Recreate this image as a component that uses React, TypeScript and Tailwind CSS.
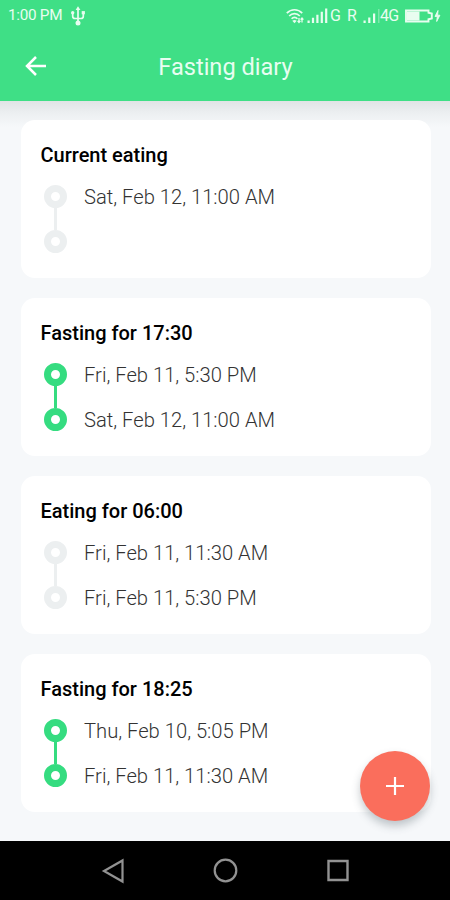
import clsx from 'clsx';

interface DiaryEntry {
  id: number;
  title: string;
  start: string;
  end?: string;
  fasting: boolean;
}

const ENTRIES: DiaryEntry[] = [
  { id: 1, title: 'Current eating', start: 'Sat, Feb 12, 11:00 AM', fasting: false },
  { id: 2, title: 'Fasting for 17:30', start: 'Fri, Feb 11, 5:30 PM', end: 'Sat, Feb 12, 11:00 AM', fasting: true },
  { id: 3, title: 'Eating for 06:00', start: 'Fri, Feb 11, 11:30 AM', end: 'Fri, Feb 11, 5:30 PM', fasting: false },
  { id: 4, title: 'Fasting for 18:25', start: 'Thu, Feb 10, 5:05 PM', end: 'Fri, Feb 11, 11:30 AM', fasting: true },
];

function UsbIcon() {
  return (
    <svg width="16" height="20" viewBox="0 0 16 20" fill="none" stroke="currentColor" strokeWidth="1.7">
      <path d="M8 3v13M2.7 7v3.2c0 1.6 1 2.3 2.3 2.3h6c1.3 0 2.3-.7 2.3-2.3V7" />
      <path d="M8 .3l2.4 3.7H5.6z" fill="currentColor" stroke="none" />
      <circle cx="8" cy="17" r="2.5" fill="currentColor" stroke="none" />
      <circle cx="2.7" cy="6.7" r="1.7" fill="currentColor" stroke="none" />
      <path d="M11.7 5.1h3.2v3.2h-3.2z" fill="currentColor" stroke="none" />
    </svg>
  );
}

function WifiIcon() {
  return (
    <svg width="19" height="16" viewBox="0 0 19 16" fill="none" stroke="currentColor" strokeWidth="1.7">
      <path d="M.8 5.2C5.2.6 11.8.6 16.2 5.2M3.2 8c3-3.2 7.6-3.2 10.6 0M5.6 10.8c1.7-1.9 4.1-1.9 5.8 0" />
      <path d="M8.5 15.2l-2.2-2.4c1.3-1.2 3.1-1.2 4.4 0z" fill="currentColor" stroke="none" />
      <path d="M13 10v4.5M16 10v4.5M11.6 12.8l1.4 1.7 1.4-1.7M14.6 11.7L16 10l1.4 1.7" strokeWidth="1.3" />
    </svg>
  );
}

function SignalIcon() {
  return (
    <svg width="21" height="16" viewBox="0 0 21 16" fill="currentColor">
      <path d="M.5 12.5h2.2V15H.5zM4.9 9.8h2.2V15H4.9zM9.3 6.8h2.2V15H9.3zM13.7 3.8h2.2V15h-2.2zM18.1.5h2.2V15h-2.2z" />
    </svg>
  );
}

function WeakSignalIcon() {
  return (
    <svg width="17" height="16" viewBox="0 0 17 16" fill="currentColor">
      <path d="M.5 12.5h2.2V15H.5zM5.2 9.5h2.2V15H5.2zM10 5.5h2.2V15H10z" />
      <path d="M15 1h1.5v14H15z" opacity="0.35" />
    </svg>
  );
}

function BatteryIcon() {
  return (
    <svg width="36" height="14" viewBox="0 0 36 14" fill="none">
      <path d="M1 1.5h22.5v2.2l3.3.8v5l-3.3.8v2.2H1z" stroke="currentColor" strokeWidth="1.9" />
      <path d="M2 2.5h12.5v9H2z" fill="currentColor" />
      <path d="M33 1.5l-3 5.9h2.3l-.6 5.1 3.2-6.3h-2.3z" fill="currentColor" stroke="currentColor" strokeWidth=".9" />
    </svg>
  );
}

function StatusBar() {
  return (
    <div className="flex h-8 items-center text-[#e8fdf0]">
      <span className="ml-[8px] w-[55px] whitespace-nowrap text-[15.3px] leading-none tracking-[-0.3px]">1:00 PM</span>
      <span className="ml-[7px]"><UsbIcon /></span>
      <div className="ml-auto mr-[9px] flex items-center whitespace-nowrap text-[16px] leading-none">
        <WifiIcon />
        <span className="ml-[2px]"><SignalIcon /></span>
        <span className="ml-[2px] w-[12px]">G</span>
        <span className="ml-[5px] w-[10px]">R</span>
        <span className="ml-[6px]"><WeakSignalIcon /></span>
        <span className="w-[21px] tracking-[-0.8px]">4G</span>
        <span className="ml-[4px]"><BatteryIcon /></span>
      </div>
    </div>
  );
}

function Header() {
  return (
    <header className="h-[100.5px] shrink-0 bg-[#3fdf86]">
      <StatusBar />
      <div className="flex h-[68px] items-center text-white">
        <button type="button" aria-label="Back" className="ml-[25px] flex h-[22px] w-[22px] items-center justify-center">
          <svg width="22" height="22" viewBox="0 0 22 22" fill="none" stroke="currentColor" strokeWidth="2.5">
            <path d="M21 11H2.5M11 2l-9 9 9 9" />
          </svg>
        </button>
        <h1 className="mr-[46px] flex-1 pt-[3px] text-center text-[23.6px] font-normal text-[#e8fdf1]">Fasting diary</h1>
      </div>
    </header>
  );
}

function Ring({ active }: { active: boolean }) {
  return <span className={clsx('h-[23px] w-[23px] rounded-full border-[7.5px] bg-white', active ? 'border-[#35dc80]' : 'border-[#eceff0]')} />;
}

function EntryCard({ entry }: { entry: DiaryEntry }) {
  return (
    <article className="h-[158px] shrink-0 rounded-[14px] bg-white px-5 pt-[21px]">
      <h2 className="text-[20px] font-medium leading-7 text-black">{entry.title}</h2>
      <div className="mt-[16px] flex pl-[3.5px]">
        <div className="flex flex-col items-center">
          <Ring active={entry.fasting} />
          <span className={clsx('h-[22px] w-[3px]', entry.fasting ? 'bg-[#35dc80]' : 'bg-[#eceff0]')} />
          <Ring active={entry.fasting} />
        </div>
        <div className="ml-[17px] flex flex-col gap-[22px] pt-[0.7px] text-[20.2px] font-light leading-[23px] text-[#333]">
          <time>{entry.start}</time>
          {entry.end && <time>{entry.end}</time>}
        </div>
      </div>
    </article>
  );
}

function NavBar() {
  return (
    <nav className="flex h-[59px] shrink-0 items-center justify-between bg-black pl-[101px] pr-[100px] text-[#929292]">
      <svg width="24" height="26" viewBox="0 0 24 26" fill="none" stroke="currentColor" strokeWidth="2.2">
        <path d="M21.5 2.5v21L3 13z" />
      </svg>
      <svg width="26" height="26" viewBox="0 0 26 26" fill="none" stroke="currentColor" strokeWidth="2.2">
        <circle cx="12.5" cy="12.5" r="10.8" />
      </svg>
      <svg width="24" height="24" viewBox="0 0 24 24" fill="none" stroke="currentColor" strokeWidth="2.4">
        <path d="M2.5 2h19v19h-19z" />
      </svg>
    </nav>
  );
}

export default function App() {
  return (
    <div className="flex h-[900px] w-[450px] flex-col overflow-hidden bg-[#f6f8fa] font-[Roboto,sans-serif]">
      <Header />
      <main className="relative flex min-h-0 flex-1 flex-col gap-[20.1px] bg-[linear-gradient(to_bottom,#e1e4e6_0px,#eceff1_12px,#f6f8fa_26px)] pl-[20.5px] pr-[19.5px] pt-[19.7px]">
        {ENTRIES.map((entry) => (
          <EntryCard key={entry.id} entry={entry} />
        ))}
        <button
          type="button"
          aria-label="Add entry"
          className="absolute bottom-[20.5px] right-5 flex h-[70px] w-[70px] items-center justify-center rounded-full bg-[#fa6e5c] text-white shadow-[0_5px_9px_rgba(60,75,85,0.3)]"
        >
          <svg width="20" height="20" viewBox="0 0 20 20" fill="none" stroke="currentColor" strokeWidth="2.2">
            <path d="M10 1v18M1 10h18" />
          </svg>
        </button>
      </main>
      <NavBar />
    </div>
  );
}
